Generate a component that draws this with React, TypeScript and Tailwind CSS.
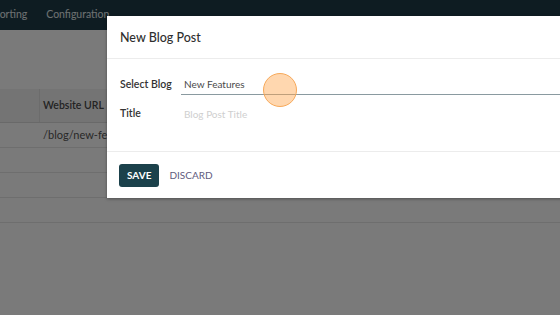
import React from 'react';

const rows = ['/blog/new-features', '', '', ''];

export default function App() {
  return (
    <div
      className="relative w-[560px] h-[315px] overflow-hidden bg-white"
      style={{ fontFamily: 'Lato, "Open Sans", sans-serif' }}
    >
      {/* page under the dialog */}
      <div className="h-[30px] bg-[#1e3b48] flex items-center gap-[19px] text-[10.5px] text-[#e4ecee]">
        <span className="-ml-[18px]">Reporting</span>
        <span>Configuration</span>
      </div>
      <div className="mt-[59px]">
        <div className="flex h-[34px] bg-[#f2f2f2] border-b border-[#dcdcdc] text-[10.5px] font-semibold text-[#4a4a4a]">
          <div className="w-[40px] border-r border-[#e2e2e2]" />
          <div className="flex items-center pl-[3px]">Website URL</div>
        </div>
        {rows.map((url, i) => (
          <div
            key={i}
            className="flex items-center h-[25px] border-b border-[#e6e6e6] text-[11px] text-[#555]"
          >
            <div className="w-[40px]" />
            <div className="pl-[3px]">{url}</div>
          </div>
        ))}
      </div>

      {/* backdrop */}
      <div className="absolute inset-0 bg-black/[0.52]" />

      {/* dialog */}
      <div className="absolute left-[107px] top-[16px] w-[500px] bg-white shadow-[0_1px_3px_rgba(0,0,0,0.35)]">
        <div className="h-[43px] flex items-center px-[13px] pt-[2px] border-b border-[#ececec] text-[12.5px] font-medium text-[#2f2f2f]">
          New Blog Post
        </div>
        <div className="pt-[16px] pb-[27px] px-[13px] flex flex-col gap-[9px]">
          <div className="flex h-[20px]">
            <div className="w-[61px] flex items-center text-[10.5px] font-semibold text-[#333]">Select Blog</div>
            <div className="flex-1 flex items-center pl-[3px] border-b-[1.5px] border-[#8a9aa0] text-[10px] text-[#4a4a4a]">
              New Features
            </div>
          </div>
          <div className="flex h-[20px]">
            <div className="w-[61px] flex items-center text-[10.5px] font-semibold text-[#333]">Title</div>
            <div className="flex-1 flex items-center pl-[3px] text-[10px] text-[#cfcfcf]">Blog Post Title</div>
          </div>
        </div>
        <div className="h-[47px] flex items-center gap-[10px] px-[12px] border-t border-[#ececec]">
          <button className="h-[23px] px-[8px] rounded-[3px] bg-[#1b414b] text-white text-[10px] font-bold">
            SAVE
          </button>
          <button className="text-[10px] text-[#5f5b7d]">DISCARD</button>
        </div>
      </div>

      {/* click marker */}
      <div className="absolute left-[263px] top-[73px] w-[34px] h-[34px] rounded-full bg-[#ffa64d]/45 border-[1.5px] border-[#f7a95a]" />
    </div>
  );
}
